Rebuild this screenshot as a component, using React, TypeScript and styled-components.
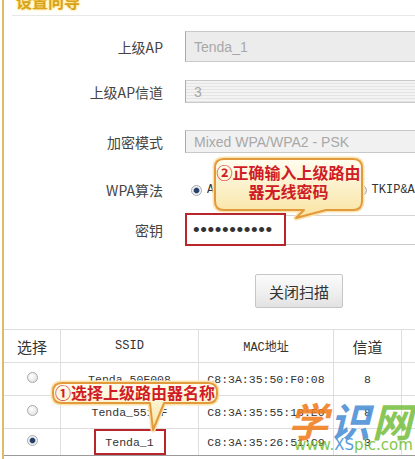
import React from "react";
import styled, { createGlobalStyle } from "styled-components";

const Global = createGlobalStyle`
  html, body { margin: 0; padding: 0; background: #fff; }
  body {
    width: 415px; height: 459px; overflow: hidden;
    font-family: "Liberation Sans", "Noto Sans CJK SC", sans-serif;
  }
`;

const Page = styled.div`
  position: relative;
  width: 411px;
  height: 459px;
  margin-left: 2px;
  border-left: 2px solid #dcbc6a;
  overflow: hidden;
  background: #fff;
`;

const Header = styled.div`
  height: 15px;
  margin-left: 8px;
  border-bottom: 1px solid #e8e8e8;
  display: flex;
  align-items: flex-end;
  overflow: hidden;
`;

const Title = styled.div`
  font: bold 16px/16px "Noto Sans CJK SC", sans-serif;
  color: #d9a21b;
  text-shadow: 0 0 3px #ffe27a, 0 0 2px #ffe27a;
  margin-left: 4px;
  margin-bottom: 6px;
`;

const Row = styled.div<{ $mt: number; $h: number }>`
  display: flex;
  align-items: center;
  margin-top: ${(p) => p.$mt}px;
  height: ${(p) => p.$h}px;
`;

const Label = styled.div`
  width: 159px;
  flex: none;
  text-align: right;
  font-size: 14px;
  color: #444;
  font-family: "Noto Sans CJK SC", sans-serif;
`;

const Field = styled.div`
  margin-left: 22px;
  width: 240px;
  height: 100%;
  flex: none;
  display: flex;
  align-items: center;
  box-sizing: border-box;
`;

const TextBox = styled(Field)<{ $striped?: boolean; $bg?: string }>`
  border: 1px solid #c9c9c9;
  border-left-color: #aaa;
  background: ${(p) =>
    p.$striped
      ? "repeating-linear-gradient(180deg, #f3f3f3 0px, #f3f3f3 2px, #e4e4e4 2px, #e4e4e4 3px)"
      : p.$bg || "#ececec"};
  padding-left: 8px;
  color: #a8a8a8;
  font-size: 14px;
  white-space: nowrap;
`;

const RadioField = styled(Field)`
  padding-left: 6px;
  font-family: "Liberation Mono", monospace;
  font-size: 12px;
  color: #333;
`;

const Radio = styled.span<{ $checked?: boolean; $ml?: number }>`
  display: inline-block;
  flex: none;
  width: 11px;
  height: 11px;
  border-radius: 50%;
  box-sizing: border-box;
  border: 1px solid #a9a9a9;
  margin-left: ${(p) => p.$ml || 0}px;
  background: ${(p) =>
    p.$checked
      ? "radial-gradient(circle, #2a3f66 0 2.2px, #8fa7c8 2.8px, #f4f4f4 3.6px)"
      : "radial-gradient(circle at 40% 35%, #ffffff 0, #dadada 100%)"};
`;

const RadioText = styled.span`
  margin-left: 5px;
`;

const PassField = styled(Field)`
  background: #fff;
`;

const RedBox = styled.div`
  width: 101px;
  height: 100%;
  box-sizing: border-box;
  border: 2px solid #b8262b;
  display: flex;
  align-items: center;
  padding-left: 6px;
  font-size: 19px;
  letter-spacing: 0.6px;
  color: #333;
  line-height: 1;
`;

const PassRest = styled.div`
  flex: 1;
  height: 30px;
  box-sizing: border-box;
  border-top: 1px solid #d4d4d4;
  border-bottom: 1px solid #c8c8c8;
  margin-top: 1px;
`;

const ButtonRow = styled.div`
  margin-top: 28px;
  padding-left: 251px;
  display: flex;
`;

const Button = styled.div`
  width: 88px;
  height: 34px;
  box-sizing: border-box;
  border: 1px solid #c6c6c6;
  border-radius: 2px;
  background: linear-gradient(180deg, #fbfbfb 0%, #eeeeee 60%, #e2e2e2 100%);
  display: flex;
  align-items: center;
  justify-content: center;
  font: 15px "Noto Sans CJK SC", sans-serif;
  color: #333;
`;

const Table = styled.table`
  margin-top: 21px;
  width: 440px;
  border-collapse: collapse;
  table-layout: fixed;
`;

const Th = styled.th<{ $w?: number; $cjk?: boolean }>`
  width: ${(p) => (p.$w ? `${p.$w}px` : "auto")};
  height: 32px;
  padding: 0;
  border: 1px solid #dedede;
  font-weight: normal;
  color: #333;
  text-align: center;
  font-family: ${(p) =>
    p.$cjk ? `"Noto Sans CJK SC", sans-serif` : `"Liberation Mono", "Noto Sans CJK SC", monospace`};
  font-size: ${(p) => (p.$cjk ? 15 : 12)}px;
  &:first-child { border-left: none; }
`;

const Tr = styled.tr<{ $h: number; $last?: boolean }>`
  height: ${(p) => p.$h}px;
  td { border-bottom-color: ${(p) => (p.$last ? "#9a9a9a" : "#dedede")}; }
`;

const Td = styled.td`
  padding: 0;
  border: 1px solid #dedede;
  text-align: center;
  font-family: "Liberation Mono", monospace;
  font-size: 11.5px;
  color: #333;
  &:first-child { border-left: none; }
`;

const SelBox = styled.span`
  display: inline-flex;
  align-items: center;
  justify-content: center;
  width: 72px;
  height: 26px;
  box-sizing: border-box;
  border: 2px solid #b8262b;
  vertical-align: middle;
`;

const Bubble = styled.svg<{ $l: number; $t: number }>`
  position: absolute;
  left: ${(p) => p.$l}px;
  top: ${(p) => p.$t}px;
  overflow: visible;
`;

const BubbleText = styled.div<{ $l: number; $t: number; $w: number }>`
  position: absolute;
  left: ${(p) => p.$l}px;
  top: ${(p) => p.$t}px;
  width: ${(p) => p.$w}px;
  text-align: center;
  font: bold 16px/19px "Noto Sans CJK SC", sans-serif;
  color: #d01c26;
  white-space: nowrap;
`;

const Watermark = styled.div`
  position: absolute;
  left: 284px;
  top: 398px;
  width: 130px;
  opacity: 0.88;
  pointer-events: none;
`;

const WmChars = styled.div`
  display: flex;
  font: italic bold 40px/44px "Noto Sans CJK SC", sans-serif;
  letter-spacing: 2px;
`;

const WmChar = styled.span<{ $c: string }>`
  color: ${(p) => p.$c};
`;

const WmUrl = styled.div`
  margin-top: -5px;
  margin-left: 6px;
  font: 15px/16px "DejaVu Sans", sans-serif;
  color: #6fbf2e;
  white-space: nowrap;
`;

const WmBlue = styled.span`
  color: #3f8fd6;
`;

/* bubble: absolute rect (l,t,w,h); tail given in absolute page coords:
   base from bx1 to bx2 on the bottom edge, tip at (tx, ty) */
function BubbleShape({
  l, t, w, h, bx1, bx2, tx, ty, id,
}: {
  l: number; t: number; w: number; h: number;
  bx1: number; bx2: number; tx: number; ty: number; id: string;
}) {
  const ox = l - 3;
  const oy = t - 3;
  const r = Math.min(9, h / 2);
  const x0 = 3, y0 = 3, x1 = 3 + w, y1 = 3 + h;
  const b1 = bx1 - ox, b2 = bx2 - ox, px = tx - ox, py = ty - oy;
  const d = `M ${x0 + r} ${y0} H ${x1 - r} Q ${x1} ${y0} ${x1} ${y0 + r} V ${y1 - r} Q ${x1} ${y1} ${x1 - r} ${y1} H ${b2} L ${px} ${py} L ${b1} ${y1} H ${x0 + r} Q ${x0} ${y1} ${x0} ${y1 - r} V ${y0 + r} Q ${x0} ${y0} ${x0 + r} ${y0} Z`;
  return (
    <Bubble $l={ox} $t={oy} width={w + 6} height={Math.max(y1, py) + 3}>
      <defs>
        <linearGradient id={id} x1="0" y1="0" x2="0" y2="1">
          <stop offset="0" stopColor="#fffdf0" />
          <stop offset="1" stopColor="#f8e3a0" />
        </linearGradient>
      </defs>
      <path d={d} fill="none" stroke="#fbe3b0" strokeWidth="5" strokeLinejoin="round" />
      <path d={d} fill={`url(#${id})`} stroke="#e39a3b" strokeWidth="2" strokeLinejoin="round" />
    </Bubble>
  );
}

const rows = [
  { ssid: "Tenda_50F008", mac: "C8:3A:35:50:F0:08", ch: "8" },
  { ssid: "Tenda_5518F", mac: "C8:3A:35:55:18:E0", ch: "8" },
  { ssid: "Tenda_1", mac: "C8:3A:35:26:51:C9", ch: "3", sel: true },
];

export default function App() {
  return (
    <>
      <Global />
      <Page>
        <Header>
          <Title>设置向导</Title>
        </Header>

        <Row $mt={15} $h={31}>
          <Label>上级AP</Label>
          <TextBox>Tenda_1</TextBox>
        </Row>
        <Row $mt={18} $h={23}>
          <Label>上级AP信道</Label>
          <TextBox $striped>3</TextBox>
        </Row>
        <Row $mt={27} $h={23}>
          <Label>加密模式</Label>
          <TextBox $bg="#f1f1f1">Mixed WPA/WPA2 - PSK</TextBox>
        </Row>
        <Row $mt={25} $h={24}>
          <Label>WPA算法</Label>
          <RadioField>
            <Radio $checked />
            <RadioText>AES</RadioText>
            <Radio $ml={127} />
            <RadioText>TKIP&amp;AES</RadioText>
          </RadioField>
        </Row>
        <Row $mt={11} $h={33}>
          <Label>密钥</Label>
          <PassField>
            <RedBox>•••••••••••</RedBox>
            <PassRest />
          </PassField>
        </Row>

        <ButtonRow>
          <Button>关闭扫描</Button>
        </ButtonRow>

        <Table>
          <thead>
            <tr>
              <Th $w={56} $cjk>选择</Th>
              <Th $w={137}>SSID</Th>
              <Th $w={134}>MAC地址</Th>
              <Th $w={67} $cjk>信道</Th>
              <Th />
            </tr>
          </thead>
          <tbody>
            {rows.map((r, i) => (
              <Tr key={r.ssid} $h={i === 2 ? 27 : 33} $last={i === 2}>
                <Td>
                  <Radio $checked={r.sel} />
                </Td>
                <Td>{r.sel ? <SelBox>{r.ssid}</SelBox> : r.ssid}</Td>
                <Td>{r.mac}</Td>
                <Td>{r.ch}</Td>
                <Td />
              </Tr>
            ))}
          </tbody>
        </Table>

        <BubbleShape id="g2" l={211} t={159} w={147} h={51} bx1={300} bx2={322} tx={292} ty={218} />
        <BubbleText $l={211} $t={163} $w={147}>
          ②正确输入上级路由
          <br />
          器无线密码
        </BubbleText>

        <BubbleShape id="g1" l={49} t={383} w={164} h={20} bx1={146} bx2={160} tx={149} ty={430} />
        <BubbleText $l={49} $t={383} $w={164}>①选择上级路由器名称</BubbleText>

        <Watermark>
          <WmChars>
            <WmChar $c="#f07d1e">学</WmChar>
            <WmChar $c="#4a8fd4">识</WmChar>
            <WmChar $c="#79c042">网</WmChar>
          </WmChars>
          <WmUrl>
            www.<WmBlue>XS</WmBlue>pic.com
          </WmUrl>
        </Watermark>
      </Page>
    </>
  );
}
